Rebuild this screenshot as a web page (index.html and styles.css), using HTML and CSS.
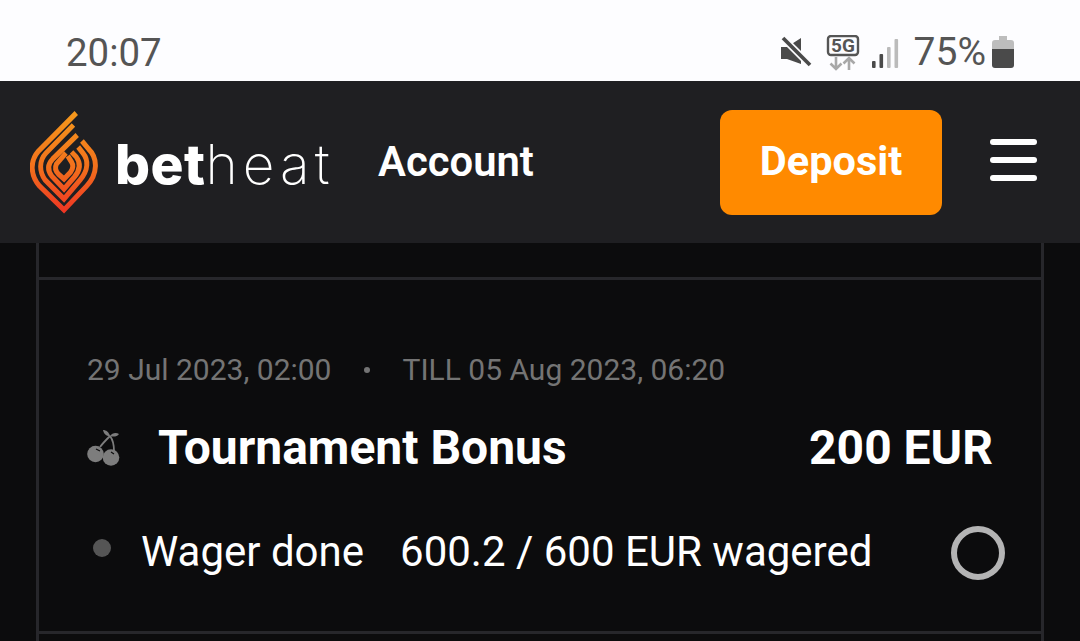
FILE: index.html
```html
<!DOCTYPE html>
<html lang="en">
<head>
    <meta charset="UTF-8">
    <meta name="viewport" content="width=device-width, initial-scale=1.0">
    <title>Betheat Account</title>
    <link rel="stylesheet" href="styles.css">
</head>
<body>
    <div class="status-bar">
        <span class="clock">20:07</span>
        <div class="status-icons">
            <svg class="icon-mute" width="32" height="32" viewBox="0 0 32 32">
                <path d="M1 11h6l14-9v26l-14-5H1z" fill="#4a4a4a"/>
                <path d="M3 2l27 27" stroke="#fdfdff" stroke-width="7"/>
                <path d="M3 2l27 27" stroke="#4a4a4a" stroke-width="3.800"/>
            </svg>
            <svg class="icon-net" width="34" height="36" viewBox="0 0 34 36">
                <rect x="2" y="1" width="30" height="19" rx="3" fill="none" stroke="#555" stroke-width="2.400"/>
                <text x="17" y="17" text-anchor="middle" class="net-label">5G</text>
                <path d="M10 22v12M4.500 28.500l5.500 5.500 5.500-5.500M23 35V23M17.500 28.500l5.500-5.500 5.500 5.500" fill="none" stroke="#a8a8a8" stroke-width="2.600"/>
            </svg>
            <svg class="icon-signal" width="28" height="30" viewBox="0 0 28 30">
                <rect x="1" y="23" width="3.600" height="7" rx="1" fill="#4a4a4a"/>
                <rect x="8.500" y="16" width="3.600" height="14" rx="1" fill="#4a4a4a"/>
                <rect x="16" y="9" width="3.600" height="21" rx="1" fill="#bbb"/>
                <rect x="23.500" y="1" width="3.600" height="29" rx="1" fill="#bbb"/>
            </svg>
            <span class="battery-text">75%</span>
            <svg class="icon-battery" width="22" height="32" viewBox="0 0 22 32">
                <path d="M7 0h8v4h4a3 3 0 0 1 3 3v7H0V7a3 3 0 0 1 3-3h4z" fill="#bdbdbd"/>
                <path d="M0 13h22v16a3 3 0 0 1-3 3H3a3 3 0 0 1-3-3z" fill="#4a4a4a"/>
            </svg>
        </div>
    </div>

    <header class="top-bar">
        <div class="logo">
            <svg width="68" height="104" viewBox="0 0 72 104" preserveAspectRatio="none">
                <defs>
                    <linearGradient id="flame" gradientUnits="userSpaceOnUse" x1="0" y1="0" x2="0" y2="104">
                        <stop offset="0" stop-color="#f59a1c"/>
                        <stop offset="0.55" stop-color="#f2701c"/>
                        <stop offset="1" stop-color="#ee3324"/>
                    </linearGradient>
                </defs>
                <g fill="none" stroke="url(#flame)" stroke-width="5.200" stroke-linejoin="miter">
                    <path d="M49 3L9 41C-1 52 1 66 10 76L36 100L60 76C72 64 72 48 62 39L55 31"/>
                    <path d="M46 15L17 43C9 51 10 62 16 70L36 89L53 70C62 60 62 50 56 43L51 37"/>
                    <path d="M50 25L24 49C18 55 19 61 23 66L36 79L47 67C54 59 53 52 49 47L44 42"/>
                    <path d="M38 43L28 54C26 58 27 61 30 64L36 69L43 62C46 58 46 55 44 52L40 46"/>
                </g>
            </svg>
            <span class="wordmark"><b>bet</b>heat</span>
        </div>
        <span class="page-title">Account</span>
        <button class="deposit-btn">Deposit</button>
        <div class="burger">
            <span></span>
            <span></span>
            <span></span>
        </div>
    </header>

    <div class="list">
        <div class="card-stub"></div>
        <div class="card">
            <div class="dates">
                <span>29 Jul 2023, 02:00</span>
                <i class="sep"></i>
                <span>TILL 05 Aug 2023, 06:20</span>
            </div>
            <div class="bonus-row">
                <svg class="cherry" width="34" height="38" viewBox="0 0 34 38">
                    <path d="M13 18C16 14 19 11 23 7M23 7c3 4 4 9 4 15" fill="none" stroke="#7d7d7d" stroke-width="1.800"/>
                    <path d="M16 1c3 0 6 2 7 6c-4 0-6-2-7-6zM23 7c2-3 6-4 9-2c-2 3-6 3-9 2z" fill="#7d7d7d"/>
                    <circle cx="8.500" cy="25" r="8.300" fill="#7d7d7d"/>
                    <circle cx="24" cy="28.500" r="8.300" fill="#7d7d7d"/>
                    <path d="M9 20l4 2M24 23l3 2" fill="none" stroke="#0c0c0d" stroke-width="1.200"/>
                </svg>
                <span class="bonus-name">Tournament Bonus</span>
                <span class="bonus-amount">200 EUR</span>
            </div>
            <div class="wager-row">
                <i class="wager-dot"></i>
                <span class="wager-label">Wager done</span>
                <span class="wager-value">600.2 / 600 EUR wagered</span>
                <i class="ring"></i>
            </div>
        </div>
        <div class="card-stub"></div>
    </div>
</body>
</html>
```

FILE: styles.css
```css
* {
    box-sizing: border-box;
}

html, body {
    height: 641px;
    overflow: hidden;
}

body {
    margin: 0;
    background: #0c0c0d;
    font-family: 'Roboto', sans-serif;
    color: #ffffff;
}

.status-bar {
    height: 81px;
    background: #fdfdff;
    display: flex;
    align-items: center;
    justify-content: space-between;
    padding: 23px 66px 0 66px;
}

.clock {
    font-size: 38.4px;
    color: #555555;
}

.status-icons {
    display: flex;
    align-items: center;
}

.icon-mute {
    margin-right: 14px;
}

.icon-net {
    margin-right: 11px;
    margin-top: 1px;
}

.net-label {
    font-family: 'Roboto', sans-serif;
    font-size: 19px;
    font-weight: 700;
    fill: #555555;
}

.icon-signal {
    margin-right: 15px;
    margin-top: 2px;
}

.battery-text {
    font-size: 39px;
    color: #555555;
    margin-right: 6px;
}

.top-bar {
    height: 162px;
    background: #1f1f22;
    display: flex;
    align-items: center;
    padding-left: 30px;
}

.logo {
    display: flex;
    align-items: center;
    width: 349px;
}

.wordmark {
    font-family: 'Inter', sans-serif;
    font-size: 55px;
    font-weight: 200;
    letter-spacing: 5px;
    margin-left: 17px;
    margin-top: 4px;
}

.wordmark b {
    font-weight: 800;
    letter-spacing: 0.5px;
}

.page-title {
    font-size: 41.8px;
    font-weight: 600;
    width: 341px;
    margin-top: -2px;
    margin-left: -1px;
    padding-right: 0;
}

.deposit-btn {
    width: 222px;
    height: 105px;
    margin-left: 1px;
    background: #ff8a00;
    border: none;
    border-radius: 12px;
    color: #ffffff;
    font-family: 'Roboto', sans-serif;
    font-size: 41.5px;
    font-weight: 700;
    padding: 0 0 3px;
}

.burger {
    margin-left: 48px;
    margin-top: -4px;
    width: 47px;
    display: flex;
    flex-direction: column;
    gap: 12px;
}

.burger span {
    display: block;
    height: 6px;
    background: #ffffff;
    border-radius: 3px;
}

.list {
    margin: 0 36px;
}

.card-stub {
    height: 34px;
    border-left: 3px solid #27272b;
    border-right: 3px solid #27272b;
}

.card {
    height: 357px;
    border: 3px solid #27272b;
    padding: 72px 48px 0;
}

.dates {
    display: flex;
    align-items: center;
    font-size: 30px;
    color: #747474;
}

.sep {
    width: 6px;
    height: 6px;
    border-radius: 50%;
    background: #747474;
    margin: 0 32px 0 33px;
}

.bonus-row {
    display: flex;
    align-items: center;
    margin-top: 32px;
}

.cherry {
    margin-right: 37px;
}

.bonus-name {
    font-size: 48px;
    font-weight: 700;
    flex: 1;
}

.bonus-amount {
    font-size: 48px;
    font-weight: 700;
}

.wager-row {
    display: flex;
    align-items: center;
    margin-top: 46px;
    font-size: 42px;
    padding-left: 6px;
}

.wager-dot {
    width: 18px;
    height: 18px;
    border-radius: 50%;
    background: #555555;
    margin-right: 30px;
    margin-top: -6px;
}

.wager-label {
    margin-right: 36px;
}

.wager-value {
    flex: 1;
}

.ring {
    width: 54px;
    height: 54px;
    border: 6px solid #b4b4b4;
    border-radius: 50%;
    margin-top: 4px;
    margin-right: -12px;
    flex-shrink: 0;
}
```
